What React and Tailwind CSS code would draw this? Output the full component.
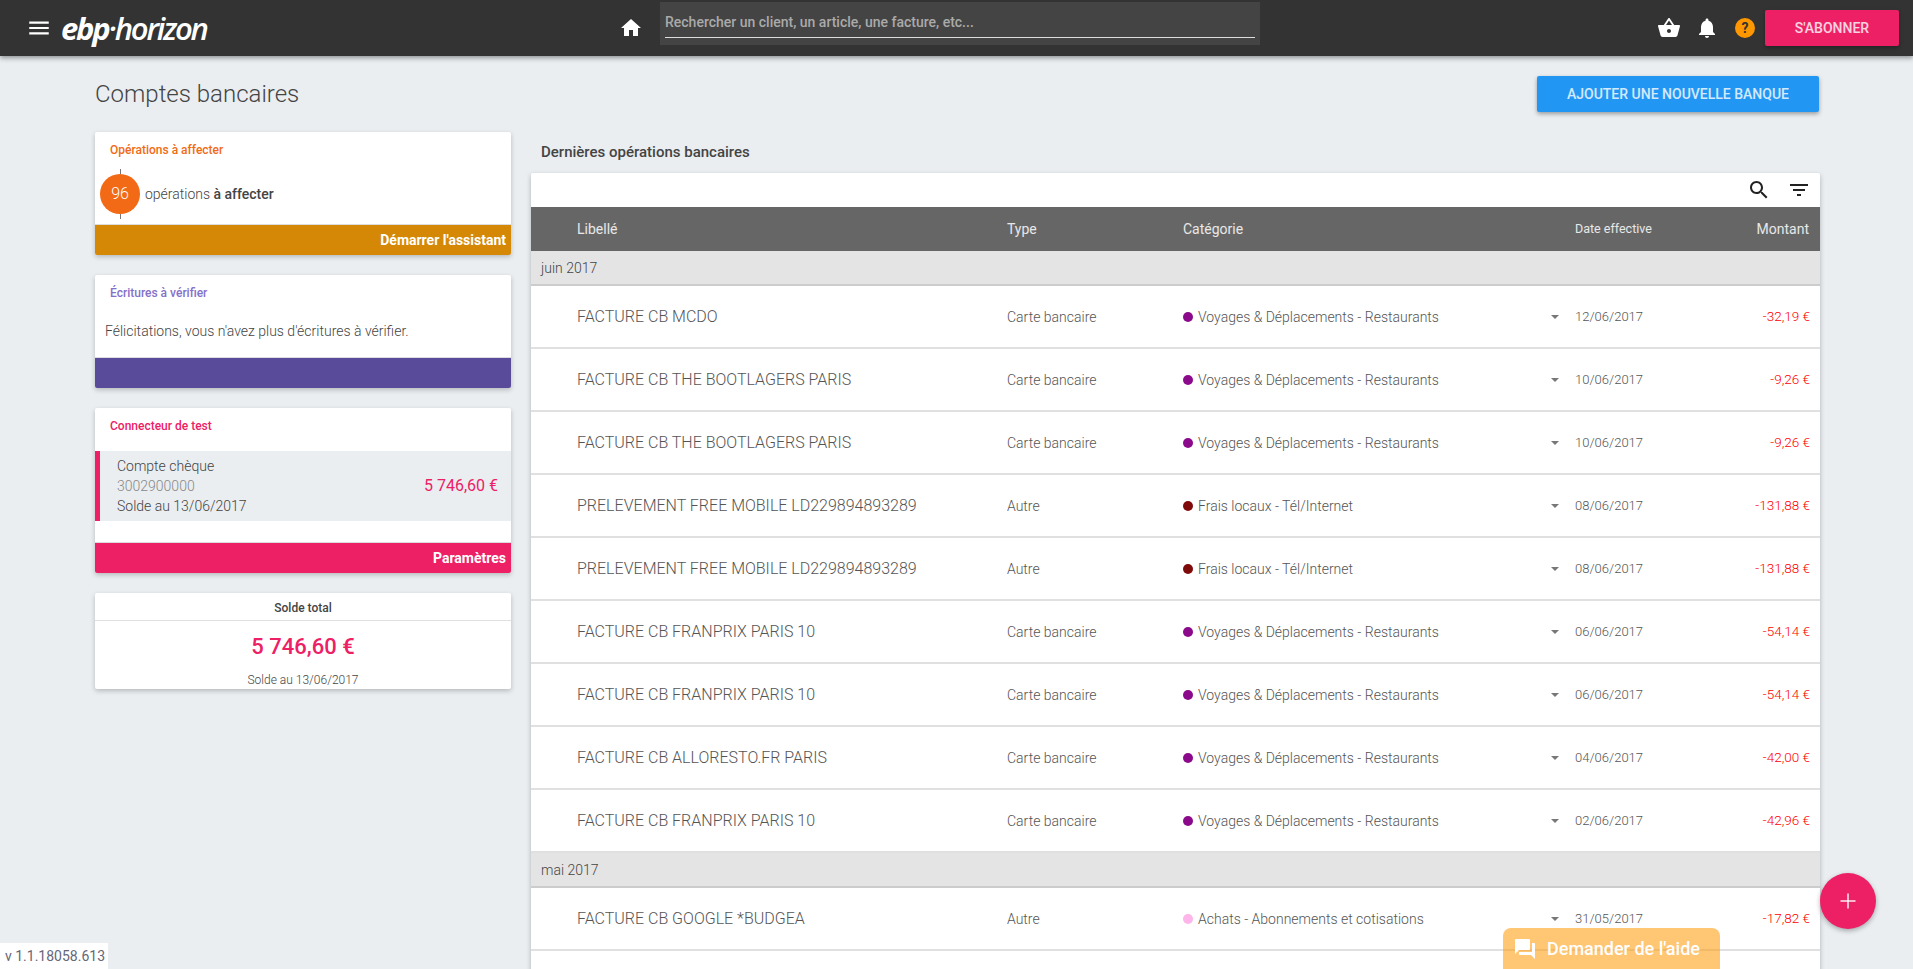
import { Plus } from "lucide-react";

const ROBOTO = "font-[Roboto,sans-serif]";

const juin = [
  ["FACTURE CB MCDO", "Carte bancaire", "v", "12/06/2017", "-32,19 €"],
  ["FACTURE CB THE BOOTLAGERS PARIS", "Carte bancaire", "v", "10/06/2017", "-9,26 €"],
  ["FACTURE CB THE BOOTLAGERS PARIS", "Carte bancaire", "v", "10/06/2017", "-9,26 €"],
  ["PRELEVEMENT FREE MOBILE LD229894893289", "Autre", "f", "08/06/2017", "-131,88 €"],
  ["PRELEVEMENT FREE MOBILE LD229894893289", "Autre", "f", "08/06/2017", "-131,88 €"],
  ["FACTURE CB FRANPRIX PARIS 10", "Carte bancaire", "v", "06/06/2017", "-54,14 €"],
  ["FACTURE CB FRANPRIX PARIS 10", "Carte bancaire", "v", "06/06/2017", "-54,14 €"],
  ["FACTURE CB ALLORESTO.FR PARIS", "Carte bancaire", "v", "04/06/2017", "-42,00 €"],
  ["FACTURE CB FRANPRIX PARIS 10", "Carte bancaire", "v", "02/06/2017", "-42,96 €"],
];
const mai = [
  ["FACTURE CB GOOGLE *BUDGEA", "Autre", "a", "31/05/2017", "-17,82 €"],
  ["", "", "", "", ""],
];

const cats = {
  v: { label: "Voyages & Déplacements - Restaurants", dot: "bg-[#8b0a8b]" },
  f: { label: "Frais locaux - Tél/Internet", dot: "bg-[#7f0a0a]" },
  a: { label: "Achats - Abonnements et cotisations", dot: "bg-[#fdb5ea]" },
};

const COLS = "grid grid-cols-[476px_176px_376px_160px_1fr] items-center";

// Material icons, same shapes as the app uses
function Icon({ d, className = "" }) {
  return (
    <svg viewBox="0 0 24 24" className={`fill-current ${className}`}>
      <path d={d} />
    </svg>
  );
}

const ICONS = {
  menu: "M3 18h18v-2H3v2zm0-5h18v-2H3v2zm0-7v2h18V6H3z",
  home: "M10 20v-6h4v6h5v-8h3L12 3 2 12h3v8z",
  basket: "M17.21 9l-4.38-6.56c-.19-.28-.51-.42-.83-.42-.32 0-.64.14-.83.43L6.79 9H2c-.55 0-1 .45-1 1 0 .09.01.18.04.27l2.54 9.27c.23.84 1 1.46 1.92 1.46h13c.92 0 1.69-.62 1.93-1.46l2.54-9.27L23 10c0-.55-.45-1-1-1h-4.79zM9 9l3-4.4L15 9H9zm3 8c-1.1 0-2-.9-2-2s.9-2 2-2 2 .9 2 2-.9 2-2 2z",
  bell: "M12 22c1.1 0 2-.9 2-2h-4c0 1.1.89 2 2 2zm6-6v-5c0-3.07-1.64-5.64-4.5-6.32V4c0-.83-.67-1.5-1.5-1.5s-1.5.67-1.5 1.5v.68C7.63 5.36 6 7.92 6 11v5l-2 2v1h16v-1l-2-2z",
  search: "M15.5 14h-.79l-.28-.27C15.41 12.59 16 11.11 16 9.5 16 5.91 13.09 3 9.5 3S3 5.91 3 9.5 5.91 16 9.5 16c1.61 0 3.09-.59 4.23-1.57l.27.28v.79l5 4.99L20.49 19l-4.99-5zm-6 0C7.01 14 5 11.99 5 9.5S7.01 5 9.5 5 14 7.01 14 9.5 11.99 14 9.5 14z",
  filter: "M10 18h4v-2h-4v2zM3 6v2h18V6H3zm3 7h12v-2H6v2z",
  chat: "M21 6h-2v9H6v2c0 .55.45 1 1 1h11l4 4V7c0-.55-.45-1-1-1zm-4 6V3c0-.55-.45-1-1-1H3c-.55 0-1 .45-1 1v14l4-4h10c.55 0 1-.45 1-1z",
};

function Row({ row }) {
  const [label, type, cat, date, amount] = row;
  return (
    <div className={`${COLS} h-[63px] shrink-0 border-b-2 border-[#e0e0e0] font-light text-[#555]`}>
      <div className="pl-[46px] text-base">{label}</div>
      <div className="text-sm">{type}</div>
      {cat ? (
        <div className="flex items-center text-sm">
          <span className={`h-[10px] w-[10px] rounded-full ${cats[cat].dot}`} />
          <span className="ml-[5px] flex-1">{cats[cat].label}</span>
          <span className="h-0 w-0 border-x-[4px] border-t-[4px] border-x-transparent border-t-[#777]" />
        </div>
      ) : <div />}
      <div className="pl-[16px] text-[13px]">{date}</div>
      <div className="pr-[10px] text-right text-[13.5px] text-[#f00]">{amount}</div>
    </div>
  );
}

function Group({ title }) {
  return (
    <div className="flex h-[35px] shrink-0 items-center border-b-2 border-[#ccc] bg-[#e4e4e4] pl-[10px] text-sm font-light text-[#444]">
      {title}
    </div>
  );
}

function Card({ className = "", children }) {
  return <section className={`overflow-hidden rounded-[2px] bg-white shadow-[0_2px_5px_rgba(0,0,0,0.22)] ${className}`}>{children}</section>;
}

function CardTitle({ color, children }) {
  return <h3 className={`pl-[15px] pt-[10px] text-xs font-medium ${color}`}>{children}</h3>;
}

export default function App() {
  return (
    <div className={`${ROBOTO} relative flex h-[969px] flex-col overflow-hidden bg-[#eaeef1] text-[#444]`}>
      <header className="z-10 flex h-[56px] shrink-0 items-center bg-[#333] shadow-[0_2px_5px_rgba(0,0,0,0.4)]">
        <Icon d={ICONS.menu} className="ml-[26px] h-[26px] w-[26px] text-white" />
        <div className="ml-[9px] w-[151px] font-['Open_Sans',sans-serif] text-[31px] italic leading-none tracking-[-2.2px] text-white">
          <span className="font-bold">ebp</span><span className="font-semibold">·horizon</span>
        </div>
        <Icon d={ICONS.home} className="ml-[407px] h-[24px] w-[24px] text-white" />
        <div className="ml-[17px] mt-[2px] flex h-[43px] w-[600px] flex-col justify-center self-start bg-[#444] px-[5px] pt-[2px]">
          <div className="border-b border-[#ddd] pb-[5px] text-sm font-medium text-[#aaa]">Rechercher un client, un article, une facture, etc...</div>
        </div>
        <div className="ml-auto mr-[14px] flex items-center">
          <Icon d={ICONS.basket} className="h-[24px] w-[24px] text-white" />
          <Icon d={ICONS.bell} className="ml-[14px] h-[24px] w-[24px] text-white" />
          <span className="ml-[16px] flex h-[20px] w-[20px] items-center justify-center rounded-full bg-[#ff9800] text-sm font-bold text-[#333]">?</span>
          <button className="ml-[10px] h-[36px] w-[134px] rounded-[2px] bg-[#ed2066] text-sm font-medium uppercase text-white/80 shadow-[0_2px_4px_rgba(0,0,0,0.3)]">S'abonner</button>
        </div>
      </header>

      <div className="flex items-start justify-between pl-[95px] pr-[94px] pt-[20px]">
        <h1 className="text-2xl font-light leading-[36px] text-[#444]">Comptes bancaires</h1>
        <button className="h-[36px] w-[282px] rounded-[2px] bg-[#2196f3] text-sm font-medium uppercase text-white/80 shadow-[0_2px_4px_rgba(0,0,0,0.35)]">Ajouter une nouvelle banque</button>
      </div>

      <main className="flex min-h-0 flex-1 items-start pl-[95px] pr-[93px] pt-[20px]">
        <aside className="flex w-[416px] shrink-0 flex-col gap-[20px]">
          <Card>
            <CardTitle color="text-[#f26a15]">Opérations à affecter</CardTitle>
            <div className="flex h-[67px] items-center pl-[5px] pt-[5px]">
              <div className="relative flex h-[40px] w-[40px] items-center justify-center rounded-full bg-[#f26a15] text-base font-light text-white">
                96
                <span className="absolute -top-[5px] left-1/2 h-[5px] w-px bg-[#777]" />
                <span className="absolute -bottom-[5px] left-1/2 h-[5px] w-px bg-[#777]" />
              </div>
              <span className="ml-[5px] text-sm font-light">opérations <b className="font-medium">à affecter</b></span>
            </div>
            <div className="flex h-[30px] items-center justify-end bg-[#d48806] pr-[5px] text-sm font-bold text-white shadow-[0_-1px_0_#ddd]">Démarrer l'assistant</div>
          </Card>

          <Card>
            <CardTitle color="text-[#8570c9]">Écritures à vérifier</CardTitle>
            <div className="flex h-[57px] items-center pl-[10px] pt-[3px] text-sm font-light">Félicitations, vous n'avez plus d'écritures à vérifier.</div>
            <div className="h-[30px] bg-[#5a4a9a] shadow-[0_-1px_0_#ddd]" />
          </Card>

          <Card>
            <CardTitle color="text-[#ed2066]">Connecteur de test</CardTitle>
            <div className="mt-[17px] flex h-[70px] items-center border-l-[5px] border-[#ed2066] bg-[#eaeef1] pl-[17px] pr-[13px] text-sm font-light leading-[20px]">
              <div className="flex-1">
                <div>Compte chèque</div>
                <div className="text-[#888]">3002900000</div>
                <div>Solde au 13/06/2017</div>
              </div>
              <div className="text-base font-normal text-[#ed2066]">5 746,60 €</div>
            </div>
            <div className="mt-[22px] flex h-[30px] items-center justify-end bg-[#ed2066] pr-[5px] text-sm font-bold text-white shadow-[0_-1px_0_#ddd]">Paramètres</div>
          </Card>

          <Card className="text-center">
            <div className="flex h-[28px] items-center justify-center border-b border-[#e0e0e0] pt-[2px] text-xs font-medium">Solde total</div>
            <div className="pt-[10px] text-[22px] font-medium leading-[32px] text-[#ed2066]">5 746,60 €</div>
            <div className="pb-[2px] pt-[10px] text-xs font-light leading-[14px]">Solde au 13/06/2017</div>
          </Card>
        </aside>

        <div className="ml-[20px] flex min-w-0 flex-1 flex-col">
          <h2 className="pb-[16px] pl-[10px] pt-[15px] text-[15px] font-medium leading-[10px] text-[#444]">Dernières opérations bancaires</h2>
          <div className="flex flex-col rounded-t-[2px] bg-white shadow-[0_2px_5px_rgba(0,0,0,0.25)]">
            <div className="flex h-[34px] items-center justify-end gap-[16px] pr-[9px] text-[#222]">
              <Icon d={ICONS.search} className="h-[24px] w-[24px]" />
              <Icon d={ICONS.filter} className="h-[24px] w-[24px]" />
            </div>
            <div className={`${COLS} h-[44px] bg-[#666] text-white/85`}>
              <div className="pl-[46px] text-sm">Libellé</div>
              <div className="text-sm">Type</div>
              <div className="text-sm">Catégorie</div>
              <div className="pl-[16px] text-[12.5px]">Date effective</div>
              <div className="pr-[11px] text-right text-sm">Montant</div>
            </div>
            <Group title="juin 2017" />
            {juin.map((row, i) => <Row key={i} row={row} />)}
            <Group title="mai 2017" />
            {mai.map((row, i) => <Row key={i} row={row} />)}
          </div>
        </div>
      </main>

      <div className="absolute bottom-0 left-0 flex h-[26px] w-[108px] items-center whitespace-nowrap bg-white pl-[5px] text-sm text-[#667]">v 1.1.18058.613</div>
      <div className="absolute bottom-0 left-[1503px] flex h-[41px] w-[217px] items-center gap-[10px] rounded-t-[8px] bg-[#ff9800]/55 pl-[10px] text-lg font-medium text-white">
        <Icon d={ICONS.chat} className="h-[24px] w-[24px]" />
        Demander de l'aide
      </div>
      <button className="absolute bottom-[40px] left-[1820px] flex h-[56px] w-[56px] items-center justify-center rounded-full bg-[#ed2066] text-white/90 shadow-[0_2px_5px_rgba(0,0,0,0.3)]">
        <Plus className="h-[24px] w-[24px]" strokeWidth={1.5} />
      </button>
    </div>
  );
}
